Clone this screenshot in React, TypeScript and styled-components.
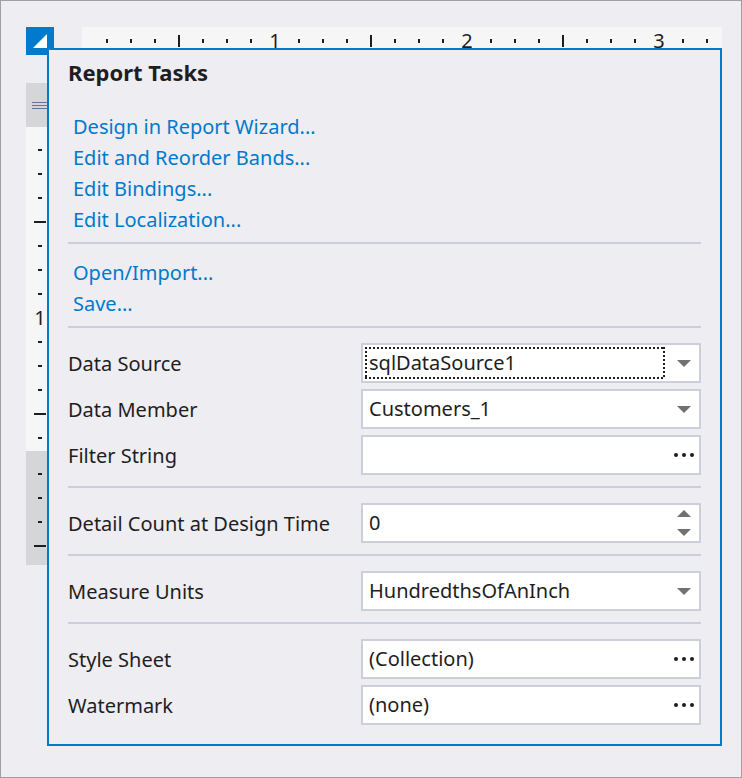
import React, { useState } from "react";
import styled, { createGlobalStyle, css } from "styled-components";

const accent = "#007acc";
const ink = "#1e1e1e";
const line = "#cccedb";
const surface = "#eeedf2";

const GlobalStyle = createGlobalStyle`
  * { box-sizing: border-box; }
  body {
    margin: 0;
    background: ${surface};
    color: ${ink};
    font: 20px/28px "Noto Sans", "Open Sans", sans-serif;
  }
  button, input, select { font: inherit; color: inherit; }
`;

const Page = styled.main`
  min-height: 100vh;
  padding: 26px 19px 31px 25px;
  border: 1px solid #a0a0a0;
`;

const Designer = styled.div`
  display: grid;
  grid-template-columns: minmax(0, 1fr);
`;

const Rulers = styled.div`
  grid-area: 1 / 1;
  display: grid;
  grid-template-columns: 28px minmax(0, 1fr);
  grid-template-rows: 28px auto;
  gap: 28px;
`;

const TagButton = styled.button`
  display: grid;
  padding: 0;
  border: 0;
  background: ${accent};
`;

const RulerStrip = styled.div<{ $vertical?: boolean; $shaded?: boolean }>`
  display: flex;
  flex-direction: ${(p) => (p.$vertical ? "column" : "row")};
  padding: ${(p) => (p.$vertical ? `11px 0 ${p.$shaded ? 7 : 1}px` : "0 0 0 13px")};
  overflow: hidden;
  background: ${(p) => (p.$shaded ? "#d6d6d8" : "#f6f6f6")};
`;

const RulerCell = styled.div<{ $vertical?: boolean }>`
  flex: none;
  display: flex;
  align-items: center;
  justify-content: center;
  ${(p) => (p.$vertical ? "height: 24px;" : "width: 24px;")}
`;

const Tick = styled.i<{ $vertical?: boolean; $major?: boolean }>`
  ${(p) => {
    const length = p.$major ? 12 : 4;
    return p.$vertical
      ? css`width: ${length}px; height: 2px;`
      : css`width: 2px; height: ${length}px;`;
  }}
  background: ${ink};
`;

const BandColumn = styled.div`
  display: flex;
  flex-direction: column;
`;

const BandHandle = styled.div`
  display: flex;
  align-items: center;
  justify-content: center;
  height: 44px;
  background: #d6d6d8;
`;

const Popup = styled.section`
  grid-area: 1 / 1;
  z-index: 1;
  margin: 21px 0 0 21px;
  padding: 0 19px 19px;
  border: 2px solid ${accent};
  background: ${surface};
`;

const Title = styled.h1`
  margin: 0;
  font-size: 22px;
  line-height: 44px;
  font-weight: 700;
`;

const Links = styled.nav<{ $first?: boolean }>`
  display: flex;
  flex-direction: column;
  align-items: flex-start;
  padding: ${(p) => (p.$first ? 17 : 13)}px 5px 7px;
`;

const TaskLink = styled.a`
  color: ${accent};
  line-height: 31px;
  text-decoration: none;
`;

const Separator = styled.hr`
  height: 2px;
  margin: 0;
  border: 0;
  background: ${line};
`;

const Group = styled.div<{ $last?: boolean }>`
  display: grid;
  gap: 6px;
  padding: 15px 0 ${(p) => (p.$last ? 0 : 11)}px;
`;

const Row = styled.div`
  display: grid;
  grid-template-columns: 293px minmax(0, 1fr);
  align-items: center;
`;

const Label = styled.label`
  padding-top: 2px;
`;

const Field = styled.div`
  display: grid;
  grid-template-columns: minmax(0, 1fr) 30px;
  height: 40px;
  border: 2px solid ${line};
  background: #fff;
`;

const Select = styled.select`
  grid-area: 1 / 1 / 2 / 3;
  appearance: none;
  padding: 0 34px 0 6px;
  border: 0;
  outline: 0;
  background: none;
`;

const TextBox = styled.input`
  min-width: 0;
  padding: 0 6px;
  border: 0;
  outline: 0;
  background: none;
  appearance: textfield;
  &::-webkit-inner-spin-button { display: none; }
`;

const IconSlot = styled.span`
  grid-area: 1 / 2;
  display: grid;
  place-items: center;
  pointer-events: none;
`;

const FocusRing = styled.span`
  grid-area: 1 / 1;
  margin: 2px 4px 2px 2px;
  pointer-events: none;
  background:
    repeating-linear-gradient(90deg, ${ink} 0 2px, transparent 2px 4px) top / 100% 2px no-repeat,
    repeating-linear-gradient(90deg, ${ink} 0 2px, transparent 2px 4px) bottom / 100% 2px no-repeat,
    repeating-linear-gradient(${ink} 0 2px, transparent 2px 4px) left / 2px 100% no-repeat,
    repeating-linear-gradient(${ink} 0 2px, transparent 2px 4px) right / 2px 100% no-repeat;
`;

const IconButton = styled.button`
  display: grid;
  place-items: center;
  padding: 0;
  border: 0;
  background: none;
`;

const Steppers = styled.div`
  display: grid;
  grid-template-rows: 1fr 1fr;
  gap: 2px;
`;

function Arrow({ up }: { up?: boolean }) {
  return (
    <svg width="14" height="7" viewBox="0 0 14 7" aria-hidden="true">
      <path d={up ? "M0 7 7 0l7 7z" : "M0 0h14L7 7z"} fill="#717171" />
    </svg>
  );
}

function Dots() {
  return (
    <svg width="20" height="4" viewBox="0 0 20 4" fill={ink} aria-hidden="true">
      <circle cx="2" cy="2" r="2" />
      <circle cx="10" cy="2" r="2" />
      <circle cx="18" cy="2" r="2" />
    </svg>
  );
}

function Ruler({ count, vertical, shaded }: { count: number; vertical?: boolean; shaded?: boolean }) {
  return (
    <RulerStrip $vertical={vertical} $shaded={shaded}>
      {Array.from({ length: count }, (_, i) => i + 1).map((n) => (
        <RulerCell key={n} $vertical={vertical}>
          {n % 8 === 0 ? n / 8 : <Tick $vertical={vertical} $major={n % 4 === 0} />}
        </RulerCell>
      ))}
    </RulerStrip>
  );
}

function SelectRow({ id, label, options, focused }: { id: string; label: string; options: string[]; focused?: boolean }) {
  return (
    <Row>
      <Label htmlFor={id}>{label}</Label>
      <Field>
        <Select id={id}>
          {options.map((o) => <option key={o}>{o}</option>)}
        </Select>
        {focused && <FocusRing />}
        <IconSlot><Arrow /></IconSlot>
      </Field>
    </Row>
  );
}

function DialogRow({ id, label, value }: { id: string; label: string; value: string }) {
  return (
    <Row>
      <Label htmlFor={id}>{label}</Label>
      <Field>
        <TextBox id={id} defaultValue={value} />
        <IconButton type="button" aria-label={`Edit ${label}`}><Dots /></IconButton>
      </Field>
    </Row>
  );
}

function CountRow() {
  const [count, setCount] = useState(0);
  return (
    <Row>
      <Label htmlFor="detail-count">Detail Count at Design Time</Label>
      <Field>
        <TextBox
          id="detail-count"
          type="number"
          min={0}
          value={count}
          onChange={(e) => setCount(Number(e.target.value))}
        />
        <Steppers>
          <IconButton type="button" aria-label="Increase" onClick={() => setCount(count + 1)}><Arrow up /></IconButton>
          <IconButton type="button" aria-label="Decrease" onClick={() => setCount(Math.max(0, count - 1))}><Arrow /></IconButton>
        </Steppers>
      </Field>
    </Row>
  );
}

export default function App() {
  return (
    <>
      <GlobalStyle />
      <Page>
        <Designer>
          <Rulers>
            <TagButton type="button" aria-label="Report tasks">
              <svg width="28" height="28" viewBox="0 0 28 28" aria-hidden="true">
                <path d="M7 21 21 7v14z" fill="#fff" />
              </svg>
            </TagButton>
            <Ruler count={31} />
            <BandColumn>
              <BandHandle>
                <svg width="16" height="7" viewBox="0 0 16 7" aria-hidden="true">
                  <path d="M0 0h16v1H0zM0 3h16v1H0zM0 6h16v1H0z" fill="#5f7799" />
                </svg>
              </BandHandle>
              <Ruler vertical count={13} />
              <Ruler vertical shaded count={4} />
            </BandColumn>
          </Rulers>
          <Popup aria-labelledby="tasks-title">
            <Title id="tasks-title">Report Tasks</Title>
            <Links $first>
              <TaskLink href="#wizard">Design in Report Wizard...</TaskLink>
              <TaskLink href="#bands">Edit and Reorder Bands...</TaskLink>
              <TaskLink href="#bindings">Edit Bindings...</TaskLink>
              <TaskLink href="#localization">Edit Localization...</TaskLink>
            </Links>
            <Separator />
            <Links>
              <TaskLink href="#open">Open/Import...</TaskLink>
              <TaskLink href="#save">Save...</TaskLink>
            </Links>
            <Separator />
            <Group>
              <SelectRow id="data-source" label="Data Source" options={["sqlDataSource1"]} focused />
              <SelectRow id="data-member" label="Data Member" options={["Customers_1"]} />
              <DialogRow id="filter" label="Filter String" value="" />
            </Group>
            <Separator />
            <Group><CountRow /></Group>
            <Separator />
            <Group>
              <SelectRow id="units" label="Measure Units" options={["HundredthsOfAnInch"]} />
            </Group>
            <Separator />
            <Group $last>
              <DialogRow id="style-sheet" label="Style Sheet" value="(Collection)" />
              <DialogRow id="watermark" label="Watermark" value="(none)" />
            </Group>
          </Popup>
        </Designer>
      </Page>
    </>
  );
}
